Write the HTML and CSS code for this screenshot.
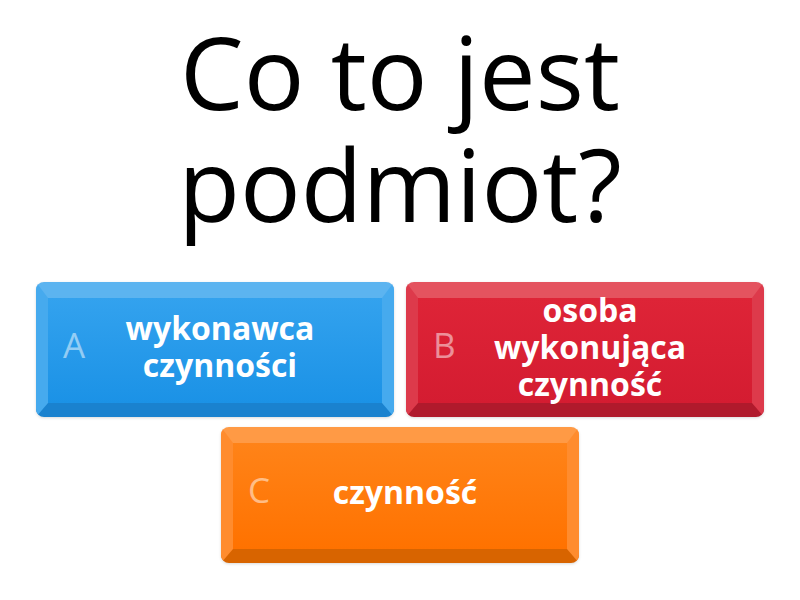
FILE: index.html
```html
<!DOCTYPE html>
<html lang="pl">
<head>
<meta charset="utf-8">
<link rel="stylesheet" href="styles.css">
</head>
<body>
<main class="quiz">
  <h1 class="question">Co to jest podmiot?</h1>
  <div class="answers">
    <div class="row">
      <button class="key key-blue"><span class="face"><span class="letter">A</span><span class="text">wykonawca czynności</span></span></button>
      <button class="key key-red"><span class="face"><span class="letter">B</span><span class="text">osoba wykonująca czynność</span></span></button>
    </div>
    <div class="row">
      <button class="key key-orange"><span class="face"><span class="letter">C</span><span class="text">czynność</span></span></button>
    </div>
  </div>
</main>
</body>
</html>
```
FILE: styles.css
```css
html, body {
  margin: 0;
  padding: 0;
  background: #ffffff;
}
.quiz {
  width: 800px;
  height: 600px;
  display: flex;
  flex-direction: column;
  align-items: center;
  font-family: "Open Sans", "Noto Sans", sans-serif;
}
.question {
  margin: 0;
  height: 282px;
  box-sizing: border-box;
  padding-top: 15px;
  width: 480px;
  text-align: center;
  font-weight: 400;
  font-size: 101px;
  line-height: 112px;
  color: #000;
}
.answers {
  display: flex;
  flex-direction: column;
  gap: 10px;
  align-items: center;
}
.row {
  display: flex;
  gap: 12px;
}
.key {
  width: 358px;
  height: 135px;
  padding: 0;
  margin: 0;
  box-sizing: border-box;
  border-style: solid;
  border-width: 16px 12px 14px 12px;
  border-radius: 8px;
  font: inherit;
  cursor: pointer;
  display: block;
  box-shadow: 0 1px 3px rgba(0, 0, 0, 0.15);
}
.face {
  position: relative;
  display: flex;
  align-items: center;
  justify-content: center;
  height: 100%;
  box-sizing: border-box;
  padding: 0 16px 9px 26px;
}
.letter {
  position: absolute;
  left: 15px;
  top: 50%;
  transform: translateY(-70%);
  font-size: 35px;
  font-weight: 400;
  color: rgba(255, 255, 255, 0.5);
  line-height: 1;
}
.text {
  font-size: 32px;
  font-weight: 700;
  line-height: 37px;
  color: #ffffff;
  text-align: center;
  width: 250px;
}
.key-blue {
  border-color: #5cb4f0 #46aaee #1a82cf #46aaee;
}
.key-blue .face {
  background: linear-gradient(#33a2ee, #1b92e6);
}
.key-red {
  border-color: #e4535f #dd3a4b #b01a2c #dd3a4b;
}
.key-red .face {
  background: linear-gradient(#de2437, #d41c31);
}
.key-orange {
  height: 136px;
  border-color: #ff9a45 #ff8c2e #d86400 #ff8c2e;
}
.key-orange .face {
  background: linear-gradient(#ff8318, #ff7200);
}
```
